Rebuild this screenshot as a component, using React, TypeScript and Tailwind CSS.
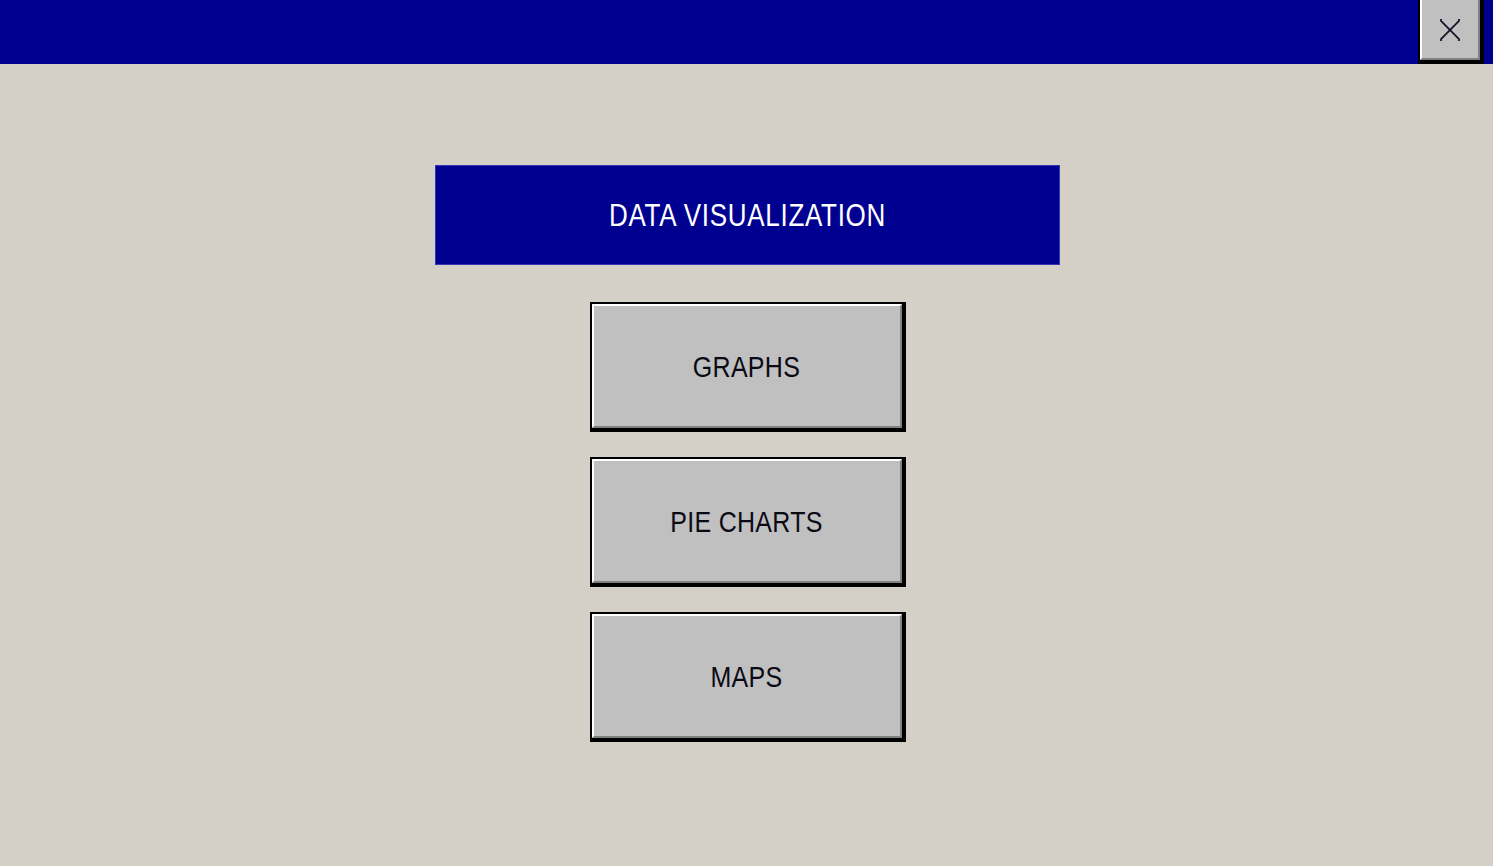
/**
 * Retro data visualization menu
 */

const menuItems = ['GRAPHS', 'PIE CHARTS', 'MAPS'];

const CloseIcon = () => (
  <svg width="22" height="24" viewBox="0 0 22 24" fill="none" stroke="#15152a" strokeWidth="1.8">
    <path d="M2 1 L2 3 L20 21 L20 23" />
    <path d="M20 1 L20 3 L2 21 L2 23" />
  </svg>
);

const MenuButton = ({ label }: { label: string }) => (
  <button className="h-[130px] w-[316px] border-t-2 border-l-2 border-r-[4px] border-b-[4px] border-black bg-[#c0c0c0]">
    <div className="flex h-full w-full items-center justify-center border-t-2 border-l-2 border-r-2 border-b-2 border-t-white border-l-white border-r-[#808080] border-b-[#808080]">
      <span className="inline-block scale-y-120 text-[25px] leading-none tracking-[0.3px] text-[#0a0a14]">{label}</span>
    </div>
  </button>
);

export default function App() {
  return (
    <div
      className="flex h-[866px] w-full flex-col bg-[#d4d0c8]"
      style={{ fontFamily: '"Liberation Sans", Arial, sans-serif' }}
    >
      <div className="flex h-16 shrink-0 justify-end bg-[#000090] pr-[9px]">
        <button className="flex h-16 w-[66px] items-center justify-center border-l-2 border-r-[4px] border-b-[4px] border-black bg-[#c0c0c0]">
          <div className="flex h-full w-full items-center justify-center border-l-2 border-r-2 border-b-2 border-l-white border-r-[#808080] border-b-[#808080] pt-[2px]">
            <CloseIcon />
          </div>
        </button>
      </div>

      <div className="flex flex-col items-center pl-[2px] pt-[101px]">
        <div className="flex h-[100px] w-[625px] items-center justify-center border border-[#3434b4] bg-[#000090]">
          <span className="inline-block scale-y-120 text-[26px] leading-none tracking-[0.7px] text-white">DATA VISUALIZATION</span>
        </div>

        <div className="mt-[37px] flex flex-col gap-[25px]">
          {menuItems.map((item) => (
            <MenuButton key={item} label={item} />
          ))}
        </div>
      </div>
    </div>
  );
}
